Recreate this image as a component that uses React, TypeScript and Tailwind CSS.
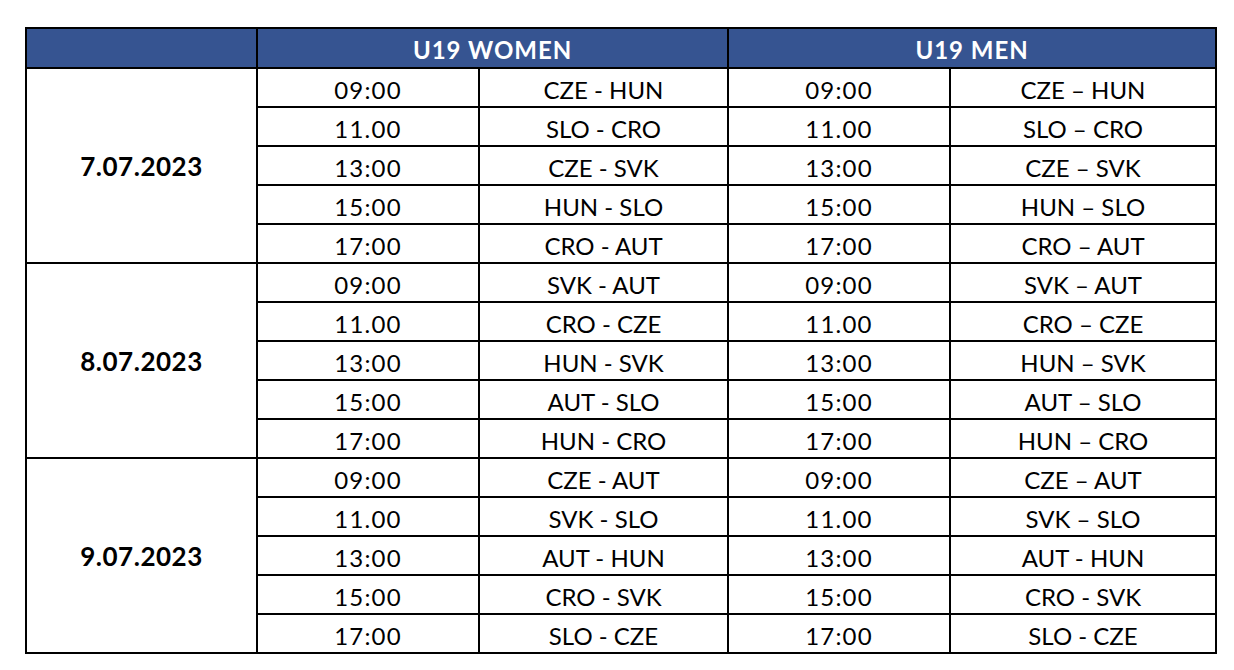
const days = [
  {
    date: "7.07.2023",
    rows: [
      ["09:00", "CZE - HUN", "09:00", "CZE – HUN"],
      ["11.00", "SLO - CRO", "11.00", "SLO – CRO"],
      ["13:00", "CZE - SVK", "13:00", "CZE – SVK"],
      ["15:00", "HUN - SLO", "15:00", "HUN – SLO"],
      ["17:00", "CRO - AUT", "17:00", "CRO – AUT"],
    ],
  },
  {
    date: "8.07.2023",
    rows: [
      ["09:00", "SVK - AUT", "09:00", "SVK – AUT"],
      ["11.00", "CRO - CZE", "11.00", "CRO – CZE"],
      ["13:00", "HUN - SVK", "13:00", "HUN – SVK"],
      ["15:00", "AUT - SLO", "15:00", "AUT – SLO"],
      ["17:00", "HUN - CRO", "17:00", "HUN – CRO"],
    ],
  },
  {
    date: "9.07.2023",
    rows: [
      ["09:00", "CZE - AUT", "09:00", "CZE – AUT"],
      ["11.00", "SVK - SLO", "11.00", "SVK – SLO"],
      ["13:00", "AUT - HUN", "13:00", "AUT - HUN"],
      ["15:00", "CRO - SVK", "15:00", "CRO - SVK"],
      ["17:00", "SLO - CZE", "17:00", "SLO - CZE"],
    ],
  },
]

export default function App() {
  return (
    <main className="min-h-screen bg-white pt-[27px] pl-[25px] font-['Lato',sans-serif] text-black">
      <table className="w-[1190px] table-fixed border-collapse text-[24px]">
        <colgroup>
          <col className="w-[231px]" />
          <col className="w-[222px]" />
          <col className="w-[249px]" />
          <col className="w-[222px]" />
          <col className="w-[266px]" />
        </colgroup>
        <thead>
          <tr className="h-[40px] bg-[#365491] text-white">
            <th className="border-2 border-black"></th>
            <th colSpan={2} className="border-2 border-black p-0 pt-[4px] text-[24px] font-bold leading-none tracking-[0.04em]">
              U19 WOMEN
            </th>
            <th colSpan={2} className="border-2 border-black p-0 pt-[4px] text-[24px] font-bold leading-none tracking-[0.04em]">
              U19 MEN
            </th>
          </tr>
        </thead>
        <tbody>
          {days.map((day) =>
            day.rows.map((r, i) => (
              <tr key={day.date + i} className="h-[39px]">
                {i === 0 && (
                  <td rowSpan={5} className="border-2 border-black p-0 text-center text-[26px] font-bold leading-none tracking-[0.02em]">
                    {day.date}
                  </td>
                )}
                {r.map((cell, j) => (
                  <td
                    key={j}
                    className={
                      j % 2 === 0
                        ? "border-2 border-black p-0 pt-[4px] text-center leading-none tracking-[0.05em]"
                        : "border-2 border-black p-0 pt-[4px] text-center leading-none"
                    }
                  >
                    {cell}
                  </td>
                ))}
              </tr>
            ))
          )}
        </tbody>
      </table>
    </main>
  )
}
